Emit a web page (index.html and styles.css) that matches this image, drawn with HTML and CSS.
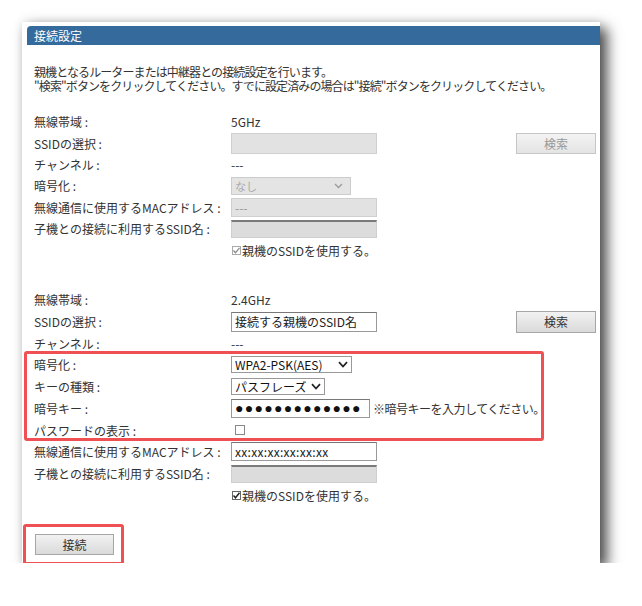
FILE: index.html
```html
<!DOCTYPE html>
<html lang="ja">
<head>
  <meta charset="UTF-8">
  <title>接続設定</title>
  <link rel="stylesheet" href="styles.css">
</head>
<body>
  <div class="panel">
    <div class="panel-title">接続設定</div>

    <div class="panel-body">
      <p class="intro">
        親機となるルーターまたは中継器との接続設定を行います。<br>
        "検索"ボタンをクリックしてください。すでに設定済みの場合は"接続"ボタンをクリックしてください。
      </p>

      <!-- 5GHz -->
      <div class="section section-5g">
        <div class="row">
          <div class="label">無線帯域 :</div>
          <div class="value">5GHz</div>
        </div>
        <div class="row">
          <div class="label">SSIDの選択 :</div>
          <div class="value">
            <span class="field field-off field-ssid"></span>
            <span class="btn btn-off btn-search">検索</span>
          </div>
        </div>
        <div class="row">
          <div class="label">チャンネル :</div>
          <div class="value">---</div>
        </div>
        <div class="row">
          <div class="label">暗号化 :</div>
          <div class="value">
            <span class="select select-off select-enc">なし
              <svg class="chev" width="9" height="6" viewBox="0 0 9 6"><polyline points="1,1 4.5,4.5 8,1" fill="none" stroke="#9a9a9a" stroke-width="1.3"/></svg>
            </span>
          </div>
        </div>
        <div class="row">
          <div class="label">無線通信に使用するMACアドレス :</div>
          <div class="value"><span class="field field-off field-mac">---</span></div>
        </div>
        <div class="row">
          <div class="label">子機との接続に利用するSSID名 :</div>
          <div class="value"><span class="field field-off field-inset"></span></div>
        </div>
        <div class="row">
          <div class="label"></div>
          <div class="value">
            <span class="check check-off">
              <svg width="9" height="9" viewBox="0 0 9 9"><polyline points="1.5,4.5 3.5,6.8 7.5,1.8" fill="none" stroke="#8a8a8a" stroke-width="1.3"/></svg>
            </span>親機のSSIDを使用する。
          </div>
        </div>
      </div>

      <!-- 2.4GHz -->
      <div class="section section-24g">
        <div class="row">
          <div class="label">無線帯域 :</div>
          <div class="value">2.4GHz</div>
        </div>
        <div class="row">
          <div class="label">SSIDの選択 :</div>
          <div class="value">
            <span class="field field-on field-ssid2">接続する親機のSSID名</span>
            <span class="btn btn-search">検索</span>
          </div>
        </div>
        <div class="row">
          <div class="label">チャンネル :</div>
          <div class="value">---</div>
        </div>

        <div class="mark-group">
          <div class="row">
            <div class="label">暗号化 :</div>
            <div class="value">
              <span class="select select-wpa">WPA2-PSK(AES)
                <svg class="chev" width="10" height="7" viewBox="0 0 10 7"><polyline points="1,1.2 5,5.5 9,1.2" fill="none" stroke="#222" stroke-width="1.7"/></svg>
              </span>
            </div>
          </div>
          <div class="row">
            <div class="label">キーの種類 :</div>
            <div class="value">
              <span class="select select-key">パスフレーズ
                <svg class="chev" width="10" height="7" viewBox="0 0 10 7"><polyline points="1,1.2 5,5.5 9,1.2" fill="none" stroke="#222" stroke-width="1.7"/></svg>
              </span>
            </div>
          </div>
          <div class="row">
            <div class="label">暗号キー :</div>
            <div class="value">
              <span class="field field-on field-pass"><span class="dots">●●●●●●●●●●●●●</span></span>
              <span class="note">※暗号キーを入力してください。</span>
            </div>
          </div>
          <div class="row">
            <div class="label">パスワードの表示 :</div>
            <div class="value"><span class="check check-empty"></span></div>
          </div>
        </div>

        <div class="row">
          <div class="label">無線通信に使用するMACアドレス :</div>
          <div class="value"><span class="field field-on field-mac2">xx:xx:xx:xx:xx:xx</span></div>
        </div>
        <div class="row">
          <div class="label">子機との接続に利用するSSID名 :</div>
          <div class="value"><span class="field field-off field-inset"></span></div>
        </div>
        <div class="row">
          <div class="label"></div>
          <div class="value">
            <span class="check">
              <svg width="9" height="9" viewBox="0 0 9 9"><polyline points="1.5,4.5 3.5,6.8 7.5,1.8" fill="none" stroke="#222" stroke-width="1.4"/></svg>
            </span>親機のSSIDを使用する。
          </div>
        </div>
      </div>

      <div class="actions">
        <span class="btn btn-connect">接続</span>
      </div>
    </div>
  </div>
</body>
</html>
```

FILE: styles.css
```css
* {
  box-sizing: border-box;
}

body {
  margin: 0;
  background-color: white;
  font-family: "Noto Sans CJK JP", "Noto Sans", sans-serif;
  font-size: 12px;
  color: #333;
}

.panel {
  margin: 22px 0 0 22px;
  width: 578px;
  height: 541px;
  padding: 4px 0 0 5px;
  background-color: white;
  box-shadow: 0 0 10px rgba(0, 0, 0, 0.1), 7px 6px 13px rgba(0, 0, 0, 0.7);
}

.panel-title {
  height: 19px;
  line-height: 19px;
  padding-left: 7px;
  background-color: #346a9c;
  color: white;
  border-radius: 4px 0 0 0;
}

.panel-body {
  padding: 0 4px 0 7px;
}

.intro {
  margin: 20px 0 0 0;
  line-height: 14px;
  letter-spacing: -0.9px;
}

.section {
  margin-top: 18px;
}

.section-24g {
  margin-top: 28px;
}

.row {
  display: grid;
  grid-template-columns: 197px 1fr;
  align-items: center;
  height: 21.4px;
}

.section-24g .row {
  height: 21.78px;
}

.value {
  display: flex;
  align-items: center;
}

/* text fields */
.field {
  display: inline-flex;
  align-items: center;
  width: 146px;
  height: 19px;
  padding-left: 3px;
  border: 1px solid #b8b8b8;
  background-color: white;
  color: #222;
}

.field-off {
  background-color: #e2e2e2;
  border-color: #d0d0d0;
  color: #999;
}

.field-ssid {
  height: 21px;
}

.field-ssid2 {
  height: 20px;
  border-color: #999;
  border-top-color: #777;
}

.field-mac2 {
  border-color: #999;
  border-top-color: #777;
  letter-spacing: 0.3px;
}

.field-inset {
  height: 18px;
  border-color: #cfcfcf;
  border-top: 2px solid #7a7a7a;
  background-color: #dcdcdc;
}

.field-pass {
  width: 139px;
  border-color: #999;
  border-top-color: #777;
}

.dots {
  font-family: "Liberation Sans", sans-serif;
  font-size: 14px;
  letter-spacing: 1.3px;
  line-height: 1;
  color: #111;
}

.note {
  margin-left: 3px;
  letter-spacing: -0.5px;
  color: #333;
}

/* drop downs */
.select {
  display: inline-flex;
  align-items: center;
  justify-content: space-between;
  height: 17px;
  padding: 0 3px 0 3px;
  border: 1px solid #999;
  background-color: white;
  color: #111;
}

.select-off {
  width: 120px;
  height: 18px;
  background-color: #e4e4e4;
  border-color: #cccccc;
  color: #aaa;
  font-size: 11px;
}

.select-wpa {
  width: 121px;
}

.select-key {
  width: 94px;
}

.chev {
  margin-left: 3px;
}

.select-off .chev {
  margin-right: 4px;
}

/* buttons */
.btn {
  display: inline-flex;
  align-items: center;
  justify-content: center;
  border: 1px solid #a6a6a6;
  background: linear-gradient(#f2f2f2, #dadada);
  color: #333;
}

.btn-search {
  margin-left: auto;
  width: 80px;
  height: 21px;
}

.section-24g .btn-search {
  height: 22px;
}

.btn-off {
  color: #999;
  border-color: #c6c6c6;
  background: linear-gradient(#f3f3f3, #e4e4e4);
}

.actions {
  margin-top: 28px;
  display: flex;
}

.btn-connect {
  position: relative;
  margin-left: 1px;
  width: 79px;
  height: 21px;
}

.btn-connect::after {
  content: "";
  position: absolute;
  left: -13px;
  right: -11px;
  top: -11px;
  bottom: -11px;
  border: 3px solid #ef5053;
  border-radius: 3px;
}

/* checkboxes */
.check {
  display: inline-flex;
  align-items: center;
  justify-content: center;
  width: 9px;
  height: 9px;
  margin: 0 1px 0 1px;
  border: 1px solid #666;
  background-color: white;
}

.check svg {
  flex: none;
}

.check-off {
  border-color: #aaa;
}

.check-empty {
  width: 10px;
  height: 10px;
  margin-left: 4px;
  border-color: #888;
}

/* highlighted group */
.mark-group {
  position: relative;
}

.mark-group::after {
  content: "";
  position: absolute;
  left: -10px;
  right: 52px;
  top: -3px;
  bottom: 0;
  border: 3px solid #ef5053;
  border-radius: 3px;
}
```
